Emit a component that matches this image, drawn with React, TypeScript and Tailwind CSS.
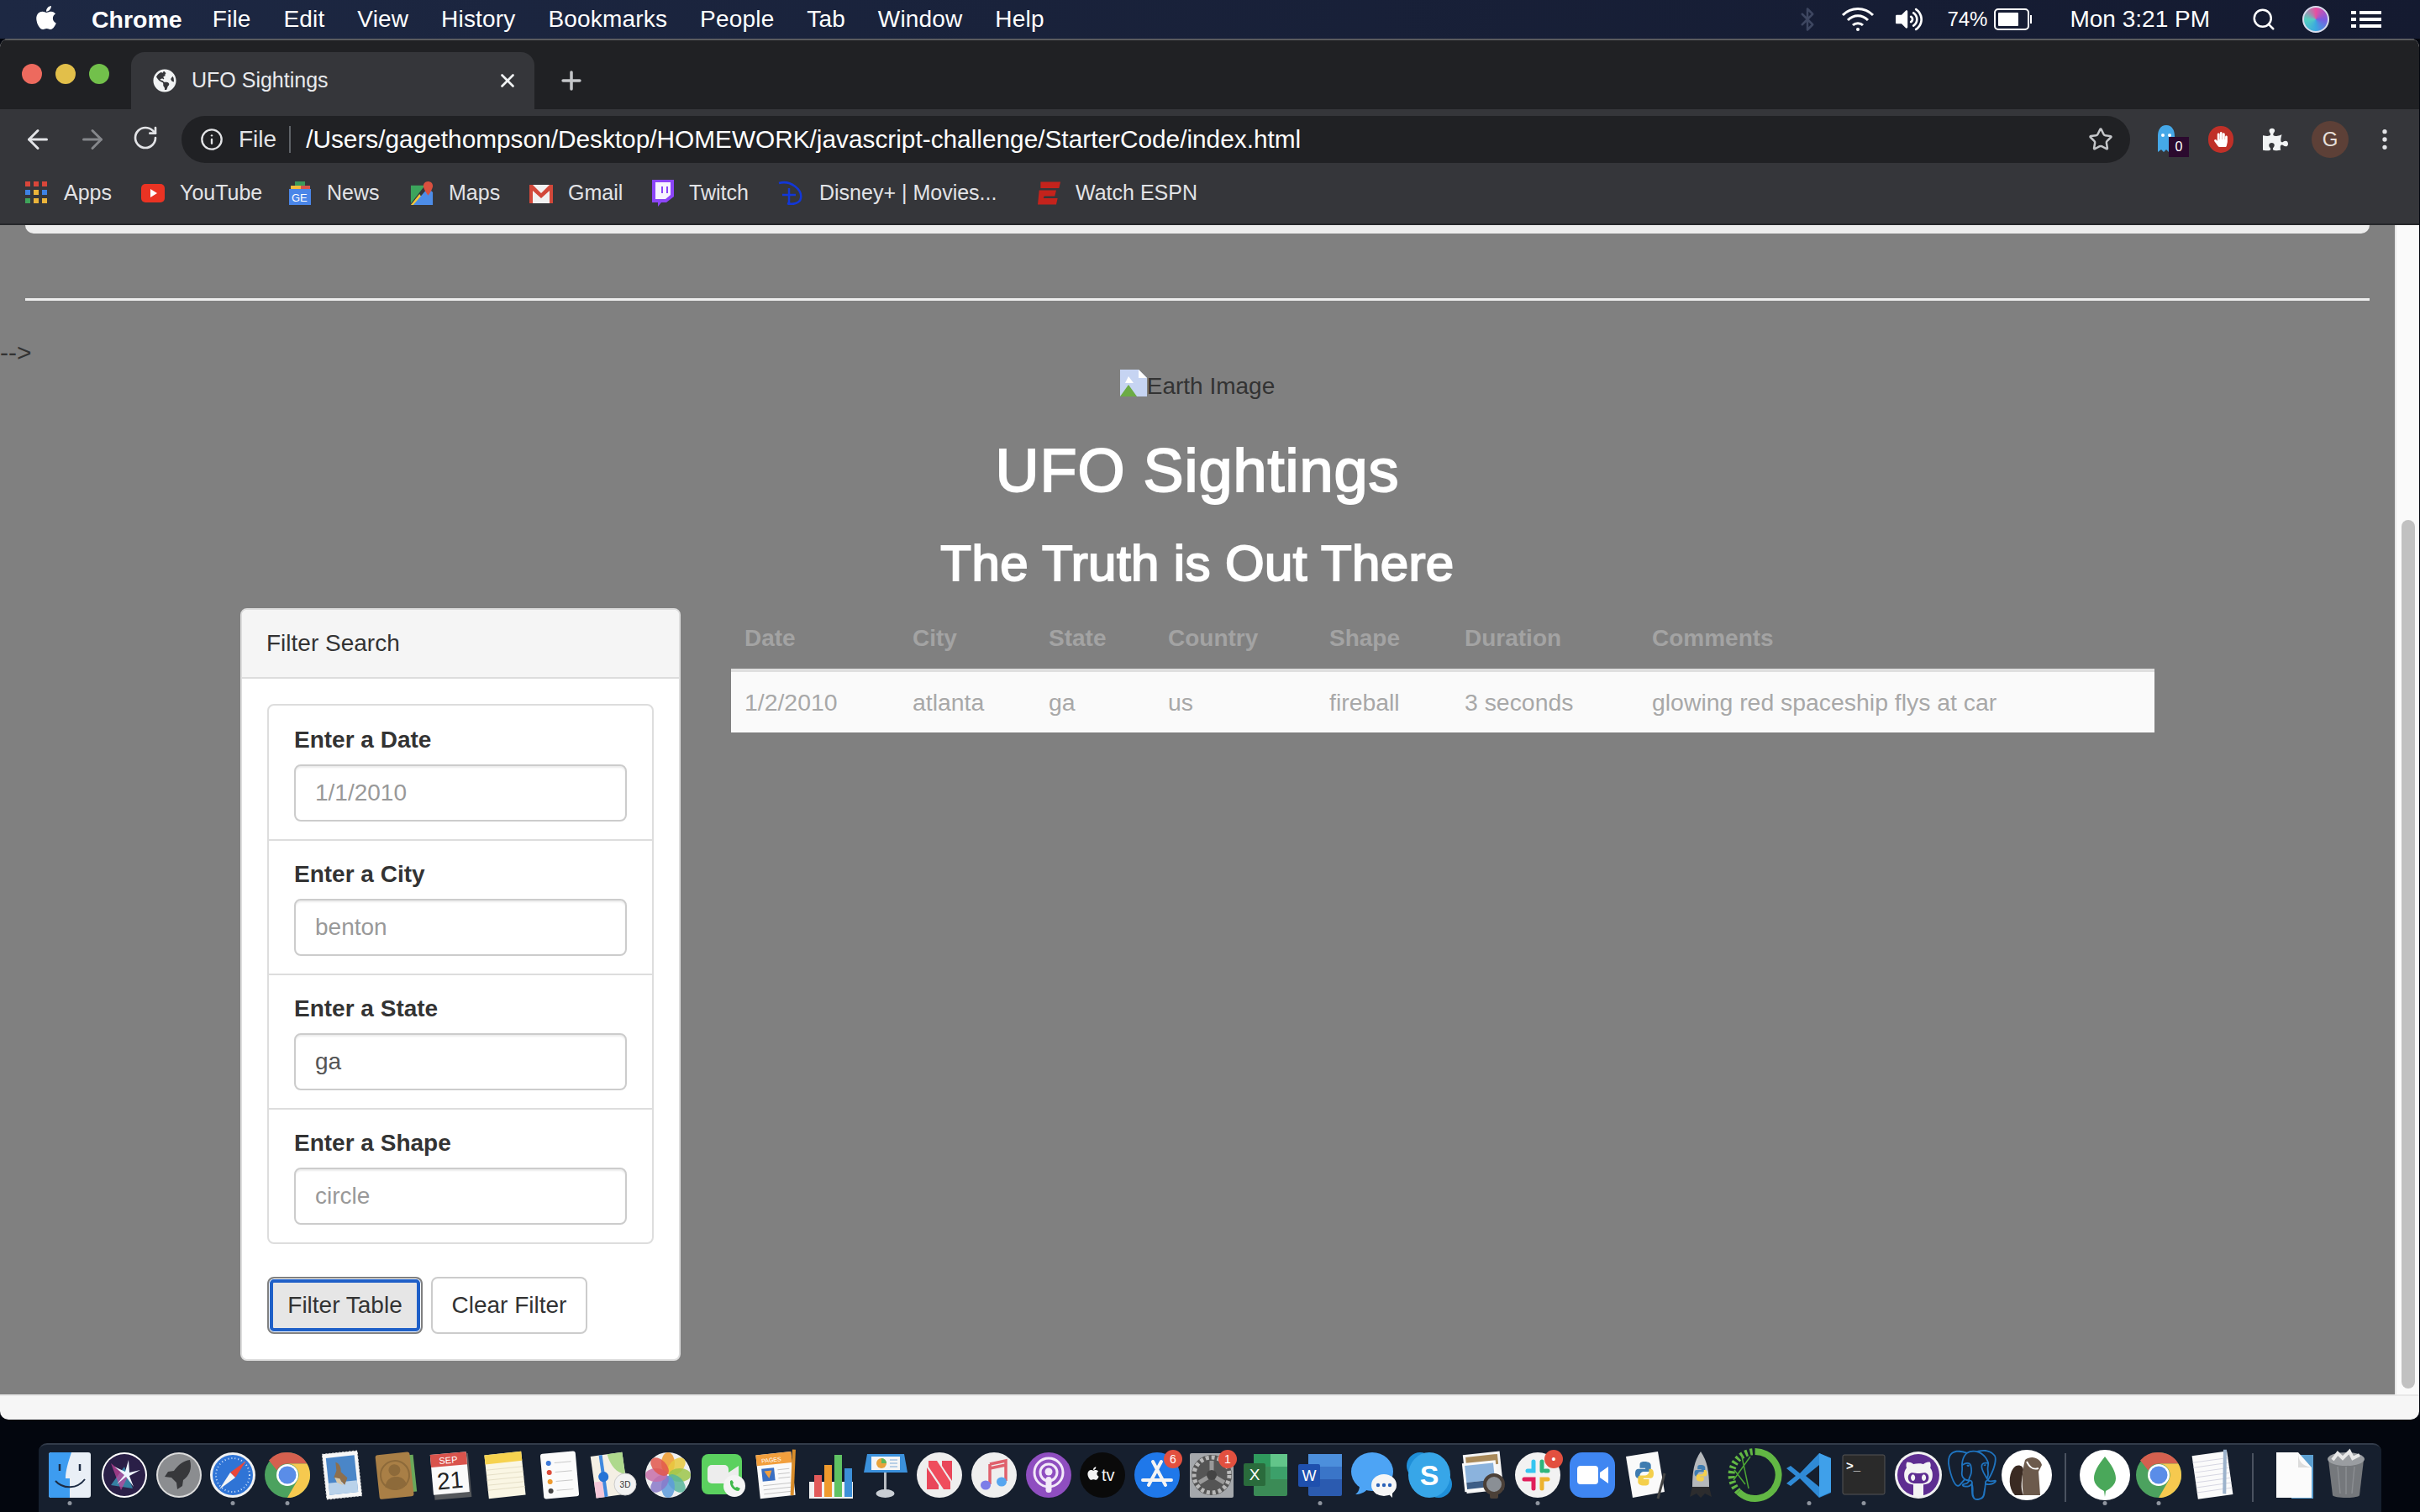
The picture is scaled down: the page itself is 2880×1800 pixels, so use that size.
import type { ReactNode } from "react";
import { ArrowLeft, ArrowRight, Bluetooth, EllipsisVertical, Info, Plus, RotateCw, Search, Star, X } from "lucide-react";
import { FaApple, FaGithubAlt, FaHandPaper, FaPuzzlePiece, FaVolumeUp, FaGlobeAmericas } from "react-icons/fa";
import { SiPostgresql } from "react-icons/si";

const menus = ["File", "Edit", "View", "History", "Bookmarks", "People", "Tab", "Window", "Help"];

const ChromeLogo = () => (
  <>
    <circle cx="30" cy="30" r="27" fill="#4ca25f" />
    <path d="M30 3a27 27 0 0 1 23.4 13.5H30a13.5 13.5 0 0 0-12.4 8L8 12.5A27 27 0 0 1 30 3Z" fill="#d5604f" />
    <path d="M53.4 16.5A27 27 0 0 1 30 57l11.7-20.2A13.5 13.5 0 0 0 30 16.5Z" fill="#f6c94f" />
    <circle cx="30" cy="30" r="13" fill="#fff" />
    <circle cx="30" cy="30" r="10.5" fill="#5a8de8" />
  </>
);

const PythonMark = ({ s = 1, x = 0, y = 0 }: { s?: number; x?: number; y?: number }) => (
  <g transform={`translate(${x} ${y}) scale(${s})`}>
    <path d="M10 0c-5 0-5 2-5 4v3h6v1H3c-2 0-3 2-3 5s1 5 3 5h2v-3c0-2 2-4 4-4h5c2 0 3-1 3-3V4c0-2-2-4-7-4Z" fill="#3f7cb0" />
    <path d="M10 26c5 0 5-2 5-4v-3H9v-1h8c2 0 3-2 3-5s-1-5-3-5h-2v3c0 2-2 4-4 4H6c-2 0-3 1-3 3v4c0 2 2 4 7 4Z" fill="#f4cf4b" />
  </g>
);

const Badge = ({ label }: { label: string }) => (
  <g>
    <circle cx="49" cy="11" r="11" fill="#e2503f" />
    <text x="49" y="16" textAnchor="middle" fontSize="14" fill="#fff">{label}</text>
  </g>
);

const dockIcons: { key: string; dot?: boolean; art: ReactNode }[] = [
  { key: "finder", dot: true, art: <>
    <rect x="5" y="3" width="50" height="54" rx="3" fill="#e9eff6" />
    <path d="M8 3h24c-4 12-7 22-7 31h5v23H8a3 3 0 0 1-3-3V6a3 3 0 0 1 3-3Z" fill="#3d9cf0" />
    <path d="M18 17v8M42 17v8" stroke="#1d2c44" strokeWidth="2.5" />
    <path d="M13 37c9 10 26 10 35-2" stroke="#1d2c44" strokeWidth="2" fill="none" />
  </> },
  { key: "siri", art: <>
    <circle cx="30" cy="30" r="27" fill="#fff" />
    <circle cx="30" cy="30" r="25" fill="#2a1f47" />
    <path d="M14 42 30 20l10 26Z" fill="#3aa8c9" opacity=".7" />
    <path d="M14 16l20 16-8 16Z" fill="#c8459c" opacity=".7" />
    <path d="M30 30 18 20l13 6 4-14 1 15 13-3-13 7 5 13-9-12-11 9Z" fill="#eef6ff" />
  </> },
  { key: "launchpad", art: <>
    <circle cx="30" cy="30" r="27" fill="#dcdcdc" />
    <circle cx="30" cy="30" r="25" fill="#8b8d90" />
    <path d="M43 12c-8 1-14 6-19 13l-7 1-4 6 8 1 6 6 1 8 6-4 1-7c7-5 11-13 8-24Z" fill="#37383b" />
  </> },
  { key: "safari", dot: true, art: <>
    <circle cx="30" cy="30" r="27" fill="#f2f2f2" />
    <circle cx="30" cy="30" r="24" fill="#2f74d6" />
    <circle cx="30" cy="30" r="20" fill="none" stroke="#cfe2fa" strokeWidth="2" strokeDasharray="1 3" />
    <path d="M46 13 27 27l6 6Z" fill="#e8463a" />
    <path d="M14 47l13-20 6 6Z" fill="#f4f4f4" />
  </> },
  { key: "chrome", dot: true, art: <ChromeLogo /> },
  { key: "mail", art: <g transform="rotate(-6 30 30)">
    <rect x="9" y="3" width="42" height="54" fill="#f7f7f7" stroke="#ddd" strokeDasharray="2 2" />
    <rect x="13" y="8" width="34" height="44" fill="#4a86c8" />
    <rect x="13" y="38" width="34" height="14" fill="#b9d2ea" />
    <path d="M24 14c5 2 6 8 5 12l7 8-4 8-6-8-6-2 4-8Z" fill="#8d6f4d" />
    <path d="M21 32l6 2 3 8-7-4Z" fill="#d9c7a6" />
  </g> },
  { key: "contacts", art: <g transform="rotate(-6 30 30)">
    <rect x="47" y="8" width="6" height="44" fill="#6aa85a" />
    <rect x="8" y="4" width="41" height="53" rx="3" fill="#a97f46" />
    <circle cx="29" cy="24" r="7" fill="#8d6a3a" />
    <path d="M16 43c2-9 8-11 13-11s11 2 13 11c-8 4-18 4-26 0Z" fill="#8d6a3a" />
    <circle cx="29" cy="30" r="17" fill="none" stroke="#8d6a3a" strokeWidth="2" />
  </g> },
  { key: "calendar", art: <g transform="rotate(-5 30 30)">
    <rect x="9" y="6" width="44" height="52" fill="#55585c" />
    <rect x="8" y="4" width="43" height="48" fill="#fafafa" />
    <rect x="8" y="4" width="43" height="15" fill="#d9534c" />
    <text x="29" y="16" textAnchor="middle" fontSize="11" fill="#fff">SEP</text>
    <text x="29" y="46" textAnchor="middle" fontSize="28" fill="#222">21</text>
  </g> },
  { key: "notes", art: <g transform="rotate(-6 30 30)">
    <rect x="8" y="4" width="44" height="52" fill="#faf6e4" />
    <rect x="8" y="4" width="44" height="11" fill="#f6d24f" />
    <path d="M8 22h44M8 28h44M8 34h44M8 40h44M8 46h44" stroke="#e5dfc7" />
  </g> },
  { key: "reminders", art: <g transform="rotate(-5 30 30)">
    <rect x="9" y="3" width="42" height="54" rx="3" fill="#fbfbfb" />
    <circle cx="18" cy="15" r="3" fill="#3c78d8" />
    <circle cx="18" cy="26" r="3" fill="#dd4b39" />
    <circle cx="18" cy="37" r="3" fill="#ef9a2d" />
    <circle cx="18" cy="48" r="3" fill="#444" />
    <path d="M25 15h20M25 26h20M25 37h20M25 48h20" stroke="#c9c9c9" />
  </g> },
  { key: "maps", art: <>
    <g transform="rotate(-8 26 30)">
      <rect x="6" y="5" width="38" height="50" fill="#f4efe4" />
      <path d="M26 5h18v26c-10-2-16-12-18-26Z" fill="#aed98d" />
      <rect x="6" y="36" width="10" height="19" fill="#f4c6d8" />
      <path d="M18 5v50" stroke="#3f88de" strokeWidth="4" />
      <circle cx="18" cy="31" r="6" fill="#2574d6" />
    </g>
    <circle cx="44" cy="41" r="13" fill="#f2f2f2" stroke="#ccc" />
    <text x="44" y="45" textAnchor="middle" fontSize="10" fill="#333">3D</text>
  </> },
  { key: "photos", art: <>
    <circle cx="30" cy="30" r="27" fill="#efefef" />
    {["#ef9a2d", "#e8c93f", "#9cc64b", "#58b59b", "#5d9bdc", "#8a79c9", "#c76fa9", "#e2574c"].map((c, i) => (
      <ellipse key={c} cx="30" cy="16" rx="8" ry="13" fill={c} opacity=".85" transform={`rotate(${i * 45} 30 30)`} />
    ))}
  </> },
  { key: "facetime", art: <>
    <rect x="5" y="5" width="48" height="48" rx="8" fill="#5bd15f" />
    <rect x="12" y="18" width="25" height="22" rx="5" fill="#ededed" />
    <path d="M37 27l12-8v22l-12-8Z" fill="#ededed" />
    <circle cx="44" cy="43" r="13" fill="#f4f4f4" />
    <path d="M39 37c-1 6 4 12 10 12l2-3-4-2-2 1c-1-1-2-2-3-4l1-2-2-3Z" fill="#3fb94c" />
  </> },
  { key: "pages", art: <g transform="rotate(-6 30 30)">
    <rect x="8" y="4" width="42" height="52" fill="#fafafa" />
    <rect x="8" y="4" width="42" height="13" fill="#f29f3d" />
    <text x="14" y="14" fontSize="7" fill="#fff">PAGES</text>
    <rect x="13" y="21" width="15" height="15" fill="#3a6fc2" />
    <path d="M16 24h9l-4 9Z" fill="#f29f3d" />
    <path d="M32 24h14M32 29h14M32 34h14M13 41h33M13 46h33M13 51h33" stroke="#c6c6c6" />
    <path d="M54 2 46 56" stroke="#d98d2a" strokeWidth="4" />
  </g> },
  { key: "numbers", art: <>
    <rect x="4" y="38" width="52" height="20" fill="#f1f1f1" />
    <rect x="10" y="30" width="9" height="26" fill="#e25a5a" />
    <rect x="22" y="18" width="9" height="38" fill="#ef9a2d" />
    <rect x="34" y="6" width="9" height="50" fill="#60c263" />
    <rect x="46" y="22" width="9" height="34" fill="#3c8fd8" />
  </> },
  { key: "keynote", art: <>
    <path d="M8 5h44l4 22H4Z" fill="#3b91dc" />
    <rect x="13" y="8" width="34" height="16" fill="#f5f5f5" />
    <circle cx="25" cy="16" r="6" fill="#e8a33a" />
    <path d="M25 16v-6a6 6 0 0 1 6 6Z" fill="#5bb85b" />
    <path d="M35 12h9M35 16h9M35 20h9" stroke="#7aa9d8" />
    <rect x="28" y="27" width="3" height="23" fill="#b7bcc2" />
    <ellipse cx="29.500" cy="52" rx="11" ry="5" fill="#c9ced4" />
  </> },
  { key: "news", art: <>
    <circle cx="30" cy="30" r="27" fill="#eeeeee" />
    <path d="M17 13h10l16 25V47h-8L17 20Z" fill="#ef4d5d" />
    <path d="M15 21l14 21v5H15ZM33 13h12v24L33 19Z" fill="#e9465a" />
  </> },
  { key: "music", art: <>
    <circle cx="30" cy="30" r="27" fill="#efefef" />
    <path d="M25 17v24M25 17l19-4v24M25 22l19-4" stroke="#e0616d" strokeWidth="3.500" fill="none" />
    <ellipse cx="20" cy="42" rx="6" ry="5.500" fill="#7c7de8" />
    <ellipse cx="39" cy="38" rx="6" ry="5.500" fill="#57a6ef" />
  </> },
  { key: "podcasts", art: <>
    <circle cx="30" cy="30" r="27" fill="#8f4ec0" />
    <circle cx="30" cy="27" r="17" fill="none" stroke="#f3e9f9" strokeWidth="3" />
    <circle cx="30" cy="27" r="10" fill="none" stroke="#f3e9f9" strokeWidth="3" />
    <circle cx="30" cy="26" r="4.500" fill="#f3e9f9" />
    <rect x="26.500" y="32" width="7" height="19" rx="3.500" fill="#f3e9f9" />
  </> },
  { key: "tv", art: <>
    <circle cx="30" cy="30" r="27" fill="#0a0a0a" />
    <FaApple x="10" y="19" size={18} color="#f4f4f4" />
    <text x="29" y="37" fontSize="20" fill="#f4f4f4">tv</text>
  </> },
  { key: "appstore", art: <>
    <circle cx="30" cy="30" r="27" fill="#1f78ea" />
    <path d="M35 14 20 42M25 14l15 28M13 36h34" stroke="#f4f4f4" strokeWidth="4" strokeLinecap="round" />
    <Badge label="6" />
  </> },
  { key: "prefs", art: <>
    <rect x="4" y="4" width="52" height="53" rx="2" fill="#a5a8ac" />
    <circle cx="30" cy="30" r="24" fill="#555" />
    <circle cx="30" cy="30" r="21" fill="none" stroke="#b9b9b9" strokeWidth="5" strokeDasharray="4 3" />
    <path d="M30 30V13M30 30 15 39M30 30l15 9" stroke="#999" strokeWidth="5" />
    <circle cx="30" cy="30" r="6" fill="#444" />
    <Badge label="1" />
  </> },
  { key: "excel", art: <>
    <rect x="16" y="5" width="40" height="50" rx="2" fill="#3b8b56" />
    <rect x="36" y="5" width="20" height="15" fill="#62c58a" />
    <rect x="16" y="5" width="20" height="15" fill="#2f9a5d" />
    <rect x="36" y="20" width="20" height="15" fill="#3ca06a" />
    <rect x="4" y="16" width="26" height="27" rx="2" fill="#2a6b3c" />
    <text x="17" y="36" textAnchor="middle" fontSize="19" fill="#fff">X</text>
  </> },
  { key: "word", dot: true, art: <>
    <rect x="16" y="5" width="40" height="50" rx="2" fill="#2b5bb0" />
    <rect x="16" y="5" width="40" height="15" fill="#4c8fdc" />
    <rect x="16" y="20" width="40" height="15" fill="#3a75c8" />
    <rect x="4" y="17" width="26" height="27" rx="2" fill="#1f50ae" />
    <text x="17" y="37" textAnchor="middle" fontSize="18" fill="#fff">W</text>
  </> },
  { key: "messages", art: <>
    <ellipse cx="27" cy="26" rx="25" ry="23" fill="#4da4f5" />
    <path d="M12 42c0 6-2 9-5 11 5 0 11-2 14-6Z" fill="#4da4f5" />
    <ellipse cx="41" cy="42" rx="15" ry="13" fill="#f6f6f6" />
    <path d="M46 52l5 5 0-8Z" fill="#f6f6f6" />
    <circle cx="34" cy="42" r="2.200" fill="#2a62b8" />
    <circle cx="41" cy="42" r="2.200" fill="#2a62b8" />
    <circle cx="48" cy="42" r="2.200" fill="#2a62b8" />
  </> },
  { key: "skype", art: <>
    <circle cx="19" cy="19" r="16" fill="#1f8fd8" />
    <circle cx="41" cy="41" r="16" fill="#1f8fd8" />
    <ellipse cx="30" cy="30" rx="25" ry="27" fill="#37a6e8" />
    <text x="30" y="42" textAnchor="middle" fontSize="34" fontWeight="700" fill="#fff">S</text>
  </> },
  { key: "preview", art: <>
    <g transform="rotate(-6 28 26)">
      <rect x="8" y="4" width="44" height="46" fill="#f5f5f5" />
      <rect x="11" y="7" width="38" height="12" fill="#a98a5a" />
      <rect x="6" y="14" width="40" height="34" fill="#f9f9f9" />
      <rect x="9" y="17" width="34" height="20" fill="#8bb3dd" />
      <rect x="9" y="37" width="34" height="8" fill="#3c5d86" />
    </g>
    <circle cx="43" cy="41" r="11" fill="#8a8f95" stroke="#4b4038" strokeWidth="4" />
    <rect x="38" y="50" width="10" height="8" rx="2" fill="#4b4038" />
  </> },
  { key: "slack", dot: true, art: <>
    <circle cx="30" cy="30" r="27" fill="#f2f2f2" />
    <path d="M25 14v11H18" stroke="#36c5f0" strokeWidth="5" strokeLinecap="round" fill="none" />
    <path d="M35 14v11M42 25h-3" stroke="#2eb67d" strokeWidth="5" strokeLinecap="round" />
    <path d="M35 46V35h7" stroke="#ecb22e" strokeWidth="5" strokeLinecap="round" fill="none" />
    <path d="M25 46V35H14" stroke="#e01e5a" strokeWidth="5" strokeLinecap="round" fill="none" />
    <Badge label="•" />
  </> },
  { key: "zoom", art: <>
    <rect x="3" y="3" width="54" height="54" rx="15" fill="#3f86f2" />
    <rect x="12" y="19" width="25" height="22" rx="4" fill="#fff" />
    <path d="M39 27l10-7v20l-10-7Z" fill="#fff" />
  </> },
  { key: "pylauncher", art: <>
    <path d="M6 8 44 2l8 48-38 7Z" fill="#fafafa" />
    <PythonMark s={1.1} x={17} y={14} />
    <path d="M52 28 44 58" stroke="#444" strokeWidth="3" />
  </> },
  { key: "rocket", art: <>
    <path d="M30 2c-8 12-10 24-10 42h20c0-18-2-30-10-42Z" fill="#b5b8bb" />
    <path d="M20 44l-3 12 8-4 5 5 5-5 8 4-3-12Z" fill="#2c2c2e" />
    <PythonMark s={.75} x={22.500} y={18} />
  </> },
  { key: "ring", art: <>
    <path d="M30 2a28 28 0 1 1-20 48" fill="none" stroke="#62b744" strokeWidth="8" />
    <path d="M10 50A28 28 0 0 1 30 2" fill="none" stroke="#62b744" strokeWidth="8" strokeDasharray="3 3" />
    <path d="M5 24l13 17M14 8l8 38M4 36 24 8" stroke="#4da634" strokeWidth="1.500" />
  </> },
  { key: "vscode", dot: true, art: <>
    <path d="M42 4 19 28 8 19l-5 3 11 9-11 9 5 3 11-9 23 23 14-6V10Z" fill="#2f8ad6" />
    <path d="M42 4l14 6v40l-14 6Z" fill="#3fa0ea" />
    <path d="M42 18 26 31l16 13Z" fill="#161f2e" />
  </> },
  { key: "terminal", dot: true, art: <>
    <rect x="5" y="6" width="50" height="47" rx="2" fill="#2a2a2a" stroke="#555" />
    <text x="9" y="24" fontSize="15" fontWeight="700" fill="#fff">{">_"}</text>
  </> },
  { key: "github", art: <>
    <circle cx="30" cy="30" r="28" fill="#f1f1f1" />
    <circle cx="30" cy="30" r="25" fill="#5e2d91" />
    <FaGithubAlt x="12" y="10" size={36} color="#f4f4f4" />
    <rect x="24" y="40" width="12" height="15" fill="#f4f4f4" />
  </> },
  { key: "pgadmin", art: <>
    <SiPostgresql x="0" y="0" size={60} color="#1f74c0" />
  </> },
  { key: "dbeaver", art: <>
    <circle cx="30" cy="30" r="30" fill="#fff" />
    <path d="M14 22c-6 8-6 24 2 32h10c-4-8-2-20 0-30 0-6-8-8-12-2Z" fill="#3a2a22" />
    <path d="M28 12c8-6 18-2 20 6l-4 8 2 28H26c-2-12-2-28 2-42Z" fill="#6c5a4c" />
    <path d="M30 14c4 8 8 10 14 8" stroke="#fff" strokeWidth="2" fill="none" />
  </> },
  { key: "divider1", art: null },
  { key: "mongo", dot: true, art: <>
    <circle cx="30" cy="30" r="30" fill="#fff" />
    <path d="M30 8c8 10 13 18 13 26 0 7-6 12-12 15l-1 7-1-7c-6-3-12-8-12-15 0-8 5-16 13-26Z" fill="#4aa85a" />
  </> },
  { key: "chrome2", dot: true, art: <ChromeLogo /> },
  { key: "textedit", art: <g transform="rotate(-8 30 30)">
    <rect x="8" y="4" width="42" height="52" fill="#fbfbfb" />
    <path d="M8 12h42M8 18h42M8 24h42M8 30h42M8 36h42M8 42h42M8 48h42" stroke="#d6d6e2" />
    <path d="M48 2 40 54" stroke="#9db3cc" strokeWidth="4" />
  </g> },
  { key: "divider2", art: null },
  { key: "document", art: <>
    <rect x="30" y="6" width="26" height="52" fill="#5c9fd0" />
    <path d="M12 3h26l16 18v36H12Z" fill="#fbfbfb" />
    <path d="M38 3c0 10 4 16 16 18H38Z" fill="#dcdcdc" />
  </> },
  { key: "trash", art: <>
    <path d="M9 12h42l-5 42c-1 4-31 4-32 0Z" fill="#75787c" />
    <ellipse cx="30" cy="11" rx="22" ry="8" fill="#9a9da1" />
    <path d="M14 12l6-8 6 6 8-8 4 8 8-4" stroke="#e8e8e8" strokeWidth="4" fill="none" />
    <path d="M20 20l3 32M30 20v33M40 20l-3 32" stroke="#8a8d91" strokeWidth="1.500" />
  </> },
];

const bookmarks: { label: string; width: string; icon: ReactNode }[] = [
  { label: "Apps", width: "w-[138px]", icon: (
    <svg viewBox="0 0 28 28" className="size-7">
      {[["#d9463a", "#d9463a", "#d9463a"], ["#3e82e4", "#ecb43a", "#3e82e4"], ["#3fa45b", "#ecb43a", "#ecb43a"]].map((row, r) =>
        row.map((c, i) => <rect key={`${r}-${i}`} x={i * 10} y={r * 10} width="6" height="6" fill={c} />),
      )}
    </svg>
  ) },
  { label: "YouTube", width: "w-[175px]", icon: (
    <svg viewBox="0 0 28 28" className="size-7"><rect y="3" width="28" height="22" rx="5" fill="#ea3323" /><path d="M11 9l8 5-8 5Z" fill="#fff" /></svg>
  ) },
  { label: "News", width: "w-[145px]", icon: (
    <svg viewBox="0 0 28 28" className="size-7">
      <path d="M8 0h12v8H8Z" fill="#3b9a5a" />
      <path d="M3 5h12v6H3Z" fill="#f4bb3c" />
      <path d="M15 5h11v6H15Z" fill="#d9534c" />
      <rect x="1" y="9" width="26" height="19" fill="#4a86e8" />
      <text x="4" y="24" fontSize="13" fill="#fff">GE</text>
    </svg>
  ) },
  { label: "Maps", width: "w-[142px]", icon: (
    <svg viewBox="0 0 28 30" className="size-7">
      <path d="M0 5h18L0 28Z" fill="#3ca55c" />
      <path d="M0 30 11 16l10 14Z" fill="#f4c93c" />
      <path d="M3 30 22 8l6 6v16Z" fill="#4d8de8" />
      <path d="M22 0c4 0 6 3 6 6 0 4-6 12-6 12s-6-8-6-12c0-3 2-6 6-6Z" fill="#d9503f" />
    </svg>
  ) },
  { label: "Gmail", width: "w-[144px]", icon: (
    <svg viewBox="0 0 28 28" className="size-7">
      <rect y="4" width="28" height="22" fill="#f1f1f1" />
      <path d="M0 4h4l10 10L24 4h4v22h-4V11l-10 9L4 11v15H0Z" fill="#d2483a" />
    </svg>
  ) },
  { label: "Twitch", width: "w-[151px]", icon: (
    <svg viewBox="0 0 28 32" className="h-8 w-7">
      <path d="M2 0h26v20l-9 7h-6l-4 5v-5H2Z" fill="#8c45f7" />
      <path d="M6 3h18v15l-6 5H6Z" fill="#f7f3ff" />
      <path d="M13 8h2v8h-2ZM19 8h2v8h-2Z" fill="#8c45f7" />
    </svg>
  ) },
  { label: "Disney+ | Movies...", width: "w-[310px]", icon: (
    <svg viewBox="0 0 32 32" className="h-8 w-8" fill="none" stroke="#1237d8" strokeWidth="2.500">
      <path d="M2 4c14-4 28 8 26 18-1 6-10 8-16 6" />
      <path d="M14 10v20M6 18h16" />
    </svg>
  ) },
  { label: "Watch ESPN", width: "w-[190px]", icon: (
    <svg viewBox="0 0 32 32" className="h-8 w-8">
      <path d="M4 0h28l-2 9H4ZM2 12h24l-2 8H9l-1 3h20l-2 9H0Z" fill="#c4231c" />
    </svg>
  ) },
];

const filters = [
  { label: "Enter a Date", placeholder: "1/1/2010", value: undefined },
  { label: "Enter a City", placeholder: "benton", value: undefined },
  { label: "Enter a State", placeholder: "", value: "ga" },
  { label: "Enter a Shape", placeholder: "circle", value: undefined },
];

const columns = [
  { name: "Date", width: "w-[200px]", value: "1/2/2010" },
  { name: "City", width: "w-[162px]", value: "atlanta" },
  { name: "State", width: "w-[142px]", value: "ga" },
  { name: "Country", width: "w-[192px]", value: "us" },
  { name: "Shape", width: "w-[161px]", value: "fireball" },
  { name: "Duration", width: "w-[223px]", value: "3 seconds" },
  { name: "Comments", width: "w-[614px]", value: "glowing red spaceship flys at car" },
];

const MenuBar = () => (
  <div className="flex h-[46px] items-center bg-linear-to-r from-[#1d2843] to-[#141a30] text-[28px] text-white">
    <FaApple size={32} className="ml-[39px] mb-1" />
    <span className="ml-[38px] text-[28.500px] font-bold">Chrome</span>
    <div className="ml-[36px] flex gap-[38.800px] tracking-[0.2px]">
      {menus.map((m) => <span key={m}>{m}</span>)}
    </div>
    <div className="ml-auto flex items-center">
      <Bluetooth size={30} color="#3d4660" className="mr-[25px]" />
      <svg viewBox="0 0 40 32" className="mr-[25px] h-8 w-10" fill="none" stroke="#fff" strokeWidth="3">
        <path d="M2 11c10-10 26-10 36 0M8 17c7-7 17-7 24 0M14 23c3-3 9-3 12 0" />
        <circle cx="20" cy="28" r="2" fill="#fff" stroke="none" />
      </svg>
      <FaVolumeUp size={32} className="mr-[29px]" />
      <span className="text-[24px]">74%</span>
      <div className="ml-2 mr-[45px] flex items-center">
        <div className="h-[26px] w-[42px] rounded-[5px] border-2 border-white p-[3px]"><div className="h-full w-[24px] rounded-[1px] bg-white" /></div>
        <div className="ml-[1px] h-[10px] w-[2px] bg-white" />
      </div>
      <span>Mon 3:21 PM</span>
      <Search size={30} className="ml-[49px]" />
      <div className="ml-[31px] size-8 rounded-full border-2 border-[#d8dcec] bg-[conic-gradient(#e84fa0,#7b5be0,#3aa8e0,#55d0c0,#e84fa0)]" />
      <svg viewBox="0 0 36 20" className="ml-[26px] mr-[46px] h-5 w-9" fill="#fff">
        <path d="M0 0h6v4H0ZM10 0h26v4H10ZM0 8h6v4H0ZM10 8h26v4H10ZM0 16h6v4H0ZM10 16h26v4H10Z" />
      </svg>
    </div>
  </div>
);

const Toolbar = () => (
  <div className="flex h-[138px] flex-col border-b-2 border-[#26272a] bg-[#35363a]">
    <div className="flex h-[72px] items-center text-[#e2e3e6]">
      <div className="flex w-[216px] justify-around pl-[12px] pr-[12px]">
        <ArrowLeft size={36} color="#e2e3e6" />
        <ArrowRight size={36} color="#85878b" />
        <RotateCw size={32} color="#e2e3e6" />
      </div>
      <div className="flex h-[56px] w-[2319px] items-center rounded-full bg-[#202124] text-[28px]">
        <Info size={28} className="ml-[22px]" />
        <span className="ml-[18px]">File</span>
        <div className="ml-[15px] h-8 w-[2px] bg-[#5f6368]" />
        <span className="ml-[18px] whitespace-nowrap text-[29.800px] text-white">/Users/gagethompson/Desktop/HOMEWORK/javascript-challenge/StarterCode/index.html</span>
        <Star size={30} color="#c4c6c9" className="ml-auto mr-[20px]" />
      </div>
      <div className="relative ml-[30px] w-[30px]">
        <svg viewBox="0 0 26 34" className="h-[40px] w-[26px]">
          <path d="M13 0C6 0 3 6 3 13v19l4-3 3 3 3-3 3 3 3-3 4 3V13C23 6 20 0 13 0Z" fill="#45a8e8" />
          <circle cx="9" cy="12" r="2" fill="#fff" /><circle cx="17" cy="12" r="2" fill="#fff" />
        </svg>
        <span className="absolute left-[16px] top-[17px] flex h-6 w-6 items-center justify-center bg-[#2b0a2e] text-[16px] text-white">0</span>
      </div>
      <div className="ml-[33px] flex h-[32px] w-[30px] items-center justify-center rounded-full bg-[#c03028]"><FaHandPaper size={18} color="#fff" /></div>
      <FaPuzzlePiece size={30} color="#f1f3f4" className="ml-[35px]" />
      <div className="ml-[28px] flex size-11 items-center justify-center rounded-full bg-[#5d4037] text-[24px] text-[#e8e0dc]">G</div>
      <EllipsisVertical size={32} color="#e2e3e6" className="ml-[27px]" />
    </div>
    <div className="flex h-[64px] items-center pb-[8px] pl-[30px] text-[25px] text-[#e2e3e6]">
      {bookmarks.map((b) => (
        <div key={b.label} className={`flex items-center gap-[18px] whitespace-nowrap ${b.width}`}>
          {b.icon}
          <span>{b.label}</span>
        </div>
      ))}
    </div>
  </div>
);

const FilterPanel = () => (
  <div className="w-[524px] shrink-0 overflow-hidden rounded-[8px] border-2 border-[#ddd] bg-white text-[#333]">
    <div className="flex h-[82px] items-center border-b-2 border-[#ddd] bg-[#f5f5f5] pl-[29px] text-[28px]">Filter Search</div>
    <div className="px-[30px] pt-[30px]">
      <div className="rounded-[8px] border-2 border-[#ddd]">
        {filters.map((f, i) => (
          <div key={f.label} className={i > 0 ? "h-[160px] border-t-2 border-[#ddd] px-[30px] pt-[23px]" : "h-[159px] px-[30px] pt-[24px]"}>
            <label className="block h-[40px] text-[28px] leading-[34px] font-bold">{f.label}</label>
            <input
              placeholder={f.placeholder}
              defaultValue={f.value}
              className="mt-[6px] block h-[68px] w-[396px] rounded-[8px] border-2 border-[#ccc] bg-white px-[23px] text-[28px] text-[#555] shadow-[inset_0_2px_2px_rgba(0,0,0,0.075)] outline-none placeholder:text-[#999]"
            />
          </div>
        ))}
      </div>
      <div className="mt-[39px] flex gap-[10px] pb-[30px]">
        <button className="h-[68px] w-[185px] rounded-[8px] border-2 border-[#808080] bg-[#e6e6e6] text-[28px] text-[#333] shadow-[inset_0_0_0_1px_#fff,inset_0_0_0_5px_#1f60c8]">Filter Table</button>
        <button className="h-[68px] w-[186px] rounded-[8px] border-2 border-[#ccc] bg-white text-[28px] text-[#333]">Clear Filter</button>
      </div>
    </div>
  </div>
);

const SightingsTable = () => (
  <table className="w-[1694px] table-fixed border-separate border-spacing-0 self-start text-left text-[28px]">
    <colgroup>
      {columns.map((c) => <col key={c.name} className={c.width} />)}
    </colgroup>
    <thead>
      <tr>
        {columns.map((c) => <th key={c.name} className="h-[72px] px-4 font-bold text-[#a3a3a3]">{c.name}</th>)}
      </tr>
    </thead>
    <tbody>
      <tr>
        {columns.map((c) => <td key={c.name} className="h-[76px] border-t-4 border-[#dfdfdf] bg-[#fafafa] px-4 text-[28.400px] text-[#a8a8a8]">{c.value}</td>)}
      </tr>
    </tbody>
  </table>
);

const Page = () => (
  <div className="flex h-[1394px] flex-none border-b-2 border-[#e8e8e8] bg-[#808080]">
    <div className="w-[2850px] shrink-0">
      <div className="mx-[30px] h-[10px] rounded-b-[16px] bg-[#ededed]" />
      <div className="mx-[30px] mt-[77px] h-[3px] bg-[#eee]" />
      <div className="mt-[46px] h-8 text-[30px] leading-8 text-[#333]">--&gt;</div>
      <div className="mt-1 flex h-8 items-end justify-center text-[28px] leading-8 text-[#333]">
        <svg viewBox="0 0 16 16" className="h-8 w-8 shrink-0">
          <path d="M0 0h11l5 5v11H0Z" fill="#c6d4f2" />
          <path d="M11 0v5h5Z" fill="#fff" />
          <path d="M5 4l3 4H3Z" fill="#fff" />
          <path d="M0 16l5-7 5 7Z" fill="#6cab45" />
        </svg>
        <span className="translate-y-1">Earth Image</span>
      </div>
      <h1 className="mt-[48px] h-[80px] text-center text-[72px] leading-[80px] tracking-[1px] text-white [-webkit-text-stroke:2px_white]">UFO Sightings</h1>
      <h2 className="mt-[38px] h-[66px] text-center text-[60px] leading-[66px] tracking-[0.4px] text-white [-webkit-text-stroke:2px_white]">The Truth is Out There</h2>
      <div className="mt-[20px] flex gap-[60px] pl-[286px]">
        <FilterPanel />
        <SightingsTable />
      </div>
    </div>
    <div className="flex-1 border-l-2 border-[#e8e8e8] bg-[#fafafa] pl-[6px] pt-[351px]">
      <div className="h-[1034px] w-4 rounded-full bg-[#c1c1c1]" />
    </div>
  </div>
);

const Dock = () => (
  <div className="mx-[46px] mt-[28px] flex h-[82px] w-[2788px] rounded-t-[10px] border-t-2 border-[#323b4a] bg-[#161f2e] px-[5px] pt-[6px]">
    {dockIcons.map((d) =>
      d.art === null ? (
        <div key={d.key} className="flex h-[60px] w-[28px] justify-center pt-1"><div className="h-[58px] w-[2px] bg-[#4a5260]" /></div>
      ) : (
        <div key={d.key} className="relative flex h-[60px] w-[64.700px] justify-center">
          <svg viewBox="0 0 60 60" className="size-[60px] overflow-visible">{d.art}</svg>
          {d.dot && <div className="absolute left-1/2 top-[61px] size-[5px] -translate-x-1/2 rounded-full bg-[#8e949e]" />}
        </div>
      ),
    )}
  </div>
);

export default function App() {
  return (
    <div className="flex h-[1800px] w-[2880px] flex-col overflow-hidden bg-[#03060e] [font-family:'Liberation_Sans',sans-serif]">
      <MenuBar />
      <div className="w-[2879px] shrink-0 overflow-hidden rounded-[10px] bg-[#f6f6f6]">
        <div className="flex h-[84px] border-t-2 border-[#5a5b5e] bg-[#202124]">
          <div className="flex w-[156px] items-center gap-[16px] pl-[26px] pb-[2px]">
            <div className="size-6 rounded-full bg-[#ed6a5e]" />
            <div className="size-6 rounded-full bg-[#e2bf4a]" />
            <div className="size-6 rounded-full bg-[#72c04b]" />
          </div>
          <div className="mt-[14px] flex h-[68px] w-[480px] items-center rounded-t-[16px] bg-[#35363a] pl-[26px] text-[25px] text-[#e8eaed]">
            <FaGlobeAmericas size={28} color="#f1f3f4" />
            <span className="ml-[18px]">UFO Sightings</span>
            <X size={26} color="#f1f3f4" strokeWidth={2.500} className="ml-[200px]" />
          </div>
          <Plus size={34} color="#c4c6c9" strokeWidth={2.500} className="ml-[27px] mt-[31px]" />
        </div>
        <Toolbar />
        <Page />
        <div className="h-[28px]" />
      </div>
      <Dock />
    </div>
  );
}
